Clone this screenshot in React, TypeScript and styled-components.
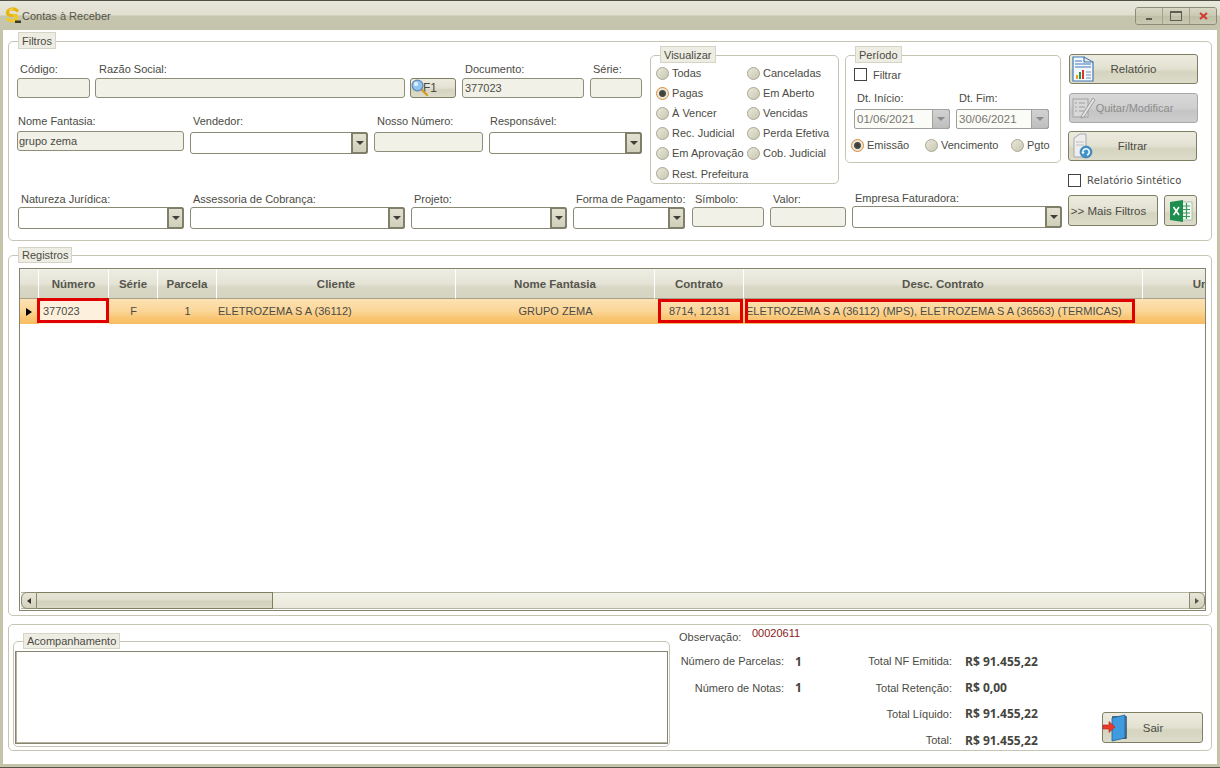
import React from "react";
import styled, { createGlobalStyle } from "styled-components";

const GlobalStyle = createGlobalStyle`
  html, body {
    margin: 0;
    padding: 0;
    background: #c5c4ab;
  }
  * {
    box-sizing: border-box;
  }
`;

const LogoIcon = () => (
  <svg width="18" height="17" viewBox="0 0 18 17">
    <path d="M13 3.5 C10 1 5 1.5 3.5 5 C3 7.5 5 8.5 8 8.5 L12 8.5" fill="none" stroke="#e6b50e" strokeWidth="3.2" strokeLinecap="round" />
    <path d="M3.5 12 C6 14.5 10 14.5 12.5 12 C13.5 10 12.5 8.5 10 8.5" fill="none" stroke="#f0c824" strokeWidth="3" strokeLinecap="round" />
    <path d="M5 3.5 L9 1.5" stroke="#fbe98a" strokeWidth="1" />
    <rect x="11" y="13.5" width="6" height="2.5" fill="#3c3a22" />
  </svg>
);

const SearchIcon = () => (
  <svg width="18" height="18" viewBox="0 0 18 18">
    <line x1="10" y1="10" x2="16" y2="16" stroke="#d89a2e" strokeWidth="2.4" strokeLinecap="round" />
    <circle cx="6.5" cy="6.5" r="5.4" fill="#8fc3f0" stroke="#5a86b8" strokeWidth="1.2" />
    <circle cx="5" cy="5" r="2.2" fill="#dcefff" />
  </svg>
);

const ReportIcon = () => (
  <svg width="22" height="26" viewBox="0 0 22 26">
    <path d="M1 1 H12 V6 H21 V25 H1 Z" fill="#f4f8fd" stroke="#3f76b6" strokeWidth="1.2" />
    <path d="M12 1 L21 6" stroke="#3f76b6" strokeWidth="1" fill="none" />
    <path d="M3 5 H10 M3 8 H19 M3 11 H19" stroke="#3f76b6" strokeWidth="1" />
    <rect x="4" y="19" width="2" height="4" fill="#e0a020" />
    <rect x="7" y="16" width="2" height="7" fill="#2f8f3a" />
    <rect x="10" y="14" width="2" height="9" fill="#d9352a" />
    <path d="M14 16 H19 M14 19 H19 M14 22 H19" stroke="#6b8fbd" strokeWidth="1" />
  </svg>
);

const NoteIcon = () => (
  <svg width="24" height="24" viewBox="0 0 24 24">
    <rect x="1" y="4" width="15" height="18" fill="#d8d8d8" stroke="#a3a3a3" />
    <path d="M3 8 H5 M7 8 H13 M3 12 H5 M7 12 H13 M3 16 H5 M7 16 H13" stroke="#a0a0a0" strokeWidth="1" />
    <path d="M10 20 L21 3 L23 5 L12 22 L9 23 Z" fill="#e4e4e4" stroke="#969696" strokeWidth="0.9" />
  </svg>
);

const RefreshDocIcon = () => (
  <svg width="22" height="26" viewBox="0 0 22 26">
    <path d="M3 5 L9 1 H15 V24 H3 Z" fill="#eeeeee" stroke="#a9a9a9" />
    <path d="M5 9 H13 M5 12 H13" stroke="#c0c0c0" />
    <circle cx="15" cy="19" r="6" fill="#3f93cf" stroke="#2a6fa5" strokeWidth="0.6" />
    <path d="M12 20 A3.2 3.2 0 1 1 16 22" fill="none" stroke="#ffffff" strokeWidth="1.5" />
    <path d="M10.5 19 L13.5 19 L12 21.5 Z" fill="#ffffff" />
  </svg>
);

const ExcelIcon = () => (
  <svg width="24" height="24" viewBox="0 0 24 24">
    <rect x="12" y="3" width="11" height="18" fill="#f4f8f4" stroke="#9ab89f" strokeWidth="0.8" />
    <path d="M14 7 H21 M14 10.5 H21 M14 14 H21 M14 17.5 H21 M17.5 4 V20" stroke="#3a9a5c" strokeWidth="1.2" />
    <path d="M1 3 L14 1 V23 L1 21 Z" fill="#1e8e4e" />
    <path d="M4.5 8 L10 16 M10 8 L4.5 16" stroke="#ffffff" strokeWidth="1.6" />
  </svg>
);

const DoorIcon = () => (
  <svg width="30" height="28" viewBox="0 0 30 28">
    <path d="M10 3 H24 V24 H20" fill="none" stroke="#27415f" strokeWidth="1.4" />
    <path d="M10 4 L23 1 V24 L10 27 Z" fill="#3f9ade" stroke="#1f5f94" strokeWidth="0.8" />
    <path d="M1 11 H7 V7.5 L13 13 L7 18.5 V15 H1 Z" fill="#e8392c" stroke="#b52318" strokeWidth="0.6" />
  </svg>
);

const Window = styled.div`
  display: flex;
  flex-direction: column;
  width: 1220px;
  height: 768px;
  overflow: hidden;
  background: #c5c4ab;
  border-bottom: 1px solid #55554a;
  font-family: "Liberation Sans", Arial, sans-serif;
  font-size: 11px;
  color: #4b4b44;
`;

const TitleBar = styled.div`
  display: flex;
  align-items: center;
  flex-shrink: 0;
  height: 30px;
  padding: 0 3px 0 4px;
  border-top: 1px solid #4f4f45;
  background: linear-gradient(to bottom, #e9e8dd 0, #dfdecf 14px, #c6c5ae 15px, #c4c3ab 100%);
`;

const TitleText = styled.span`
  color: #55554c;
`;

const WindowButtons = styled.div`
  display: flex;
  width: 82px;
  height: 18px;
  margin-left: auto;
  margin-top: 1px;
  border: 1px solid #8c8b75;
  border-radius: 3px;
  overflow: hidden;
`;

const WindowButton = styled.div`
  display: flex;
  align-items: center;
  justify-content: center;
  flex: 1;
  background: linear-gradient(to bottom, #d8d7c5, #c9c8b1 50%, #bfbea6 51%, #c9c8b2);
  border-left: 1px solid #a3a28b;

  &:first-child {
    border-left: 0;
  }
`;

const Content = styled.div`
  display: flex;
  flex: 1;
  flex-direction: column;
  margin: 0 3px 3px;
  padding: 11px 5px 0;
  background: #ffffff;
`;

const Panel = styled.div<{ $h: number; $mb?: number }>`
  position: relative;
  display: flex;
  flex-shrink: 0;
  height: ${(p) => p.$h}px;
  margin-bottom: ${(p) => p.$mb ?? 0}px;
  border: 1px solid #c6c5b3;
  border-radius: 5px;
`;

const Legend = styled.span<{ $compact?: boolean }>`
  position: absolute;
  top: ${(p) => (p.$compact ? -9 : -10)}px;
  left: 9px;
  height: ${(p) => (p.$compact ? 16 : 17)}px;
  padding: 0 3px;
  line-height: ${(p) => (p.$compact ? 15 : 16)}px;
  background: #eeede3;
  border: 1px solid #d6d5c5;
  white-space: nowrap;
`;

const FilterMain = styled.div`
  display: flex;
  flex-direction: column;
  width: 1053px;
  padding-left: 8px;
`;

const TopArea = styled.div`
  display: flex;
  height: 150px;
`;

const FieldRows = styled.div`
  width: 625px;
  padding-top: 20px;
`;

const FieldRow = styled.div<{ $mt?: number }>`
  display: flex;
  align-items: flex-start;
  margin-top: ${(p) => p.$mt ?? 0}px;
`;

const Field = styled.div<{ $w: number; $ml?: number; $gap?: number; $mt?: number }>`
  display: flex;
  flex-direction: column;
  flex-shrink: 0;
  gap: ${(p) => p.$gap ?? 2}px;
  width: ${(p) => p.$w}px;
  margin-left: ${(p) => p.$ml ?? 0}px;
  margin-top: ${(p) => p.$mt ?? 0}px;
`;

const Label = styled.label<{ $lead?: number }>`
  display: block;
  height: 14px;
  padding-left: ${(p) => p.$lead ?? 3}px;
  line-height: 14px;
  white-space: nowrap;
`;

const TextBox = styled.div<{ $pad?: number }>`
  height: 20px;
  padding: 0 ${(p) => p.$pad ?? 2}px;
  line-height: 18px;
  background: #f2f1e8;
  border: 1px solid #8f8e79;
  border-radius: 3px;
`;

const TextBoxLow = styled(TextBox)`
  margin-top: 1px;
`;

const ComboBox = styled.div<{ $low?: boolean }>`
  display: flex;
  justify-content: flex-end;
  height: 22px;
  margin-top: ${(p) => (p.$low ? 1 : 0)}px;
  background: #ffffff;
  border: 1px solid #8a8974;
  border-radius: 3px;
`;

const ComboArrow = styled.div`
  display: flex;
  align-items: center;
  justify-content: center;
  width: 17px;
  margin: -1px;
  background: linear-gradient(to bottom, #e3e2d2, #d0cfba);
  border: 2px solid #807f69;
  border-radius: 0 3px 3px 0;

  &::after {
    content: "";
    border-left: 4px solid transparent;
    border-right: 4px solid transparent;
    border-top: 4px solid #3f3f38;
  }
`;

const Combo = ({ low }: { low?: boolean }) => (
  <ComboBox $low={low}>
    <ComboArrow />
  </ComboBox>
);

const GroupBox = styled.div<{ $w: number; $h: number; $ml: number }>`
  position: relative;
  flex-shrink: 0;
  width: ${(p) => p.$w}px;
  height: ${(p) => p.$h}px;
  margin: 13px 0 0 ${(p) => p.$ml}px;
  border: 1px solid #c6c5b3;
  border-radius: 5px;
`;

const RadioGrid = styled.div`
  display: grid;
  grid-template-columns: 91px 1fr;
  grid-auto-rows: 20px;
  padding: 7px 0 0 5px;

  > :last-child {
    margin-top: 1px;
  }
`;

const RadioItem = styled.div<{ $w?: number }>`
  display: flex;
  align-items: center;
  gap: 3px;
  width: ${(p) => (p.$w ? `${p.$w}px` : "auto")};
  white-space: nowrap;
`;

const RadioDot = styled.span<{ $on?: boolean }>`
  flex-shrink: 0;
  width: 13px;
  height: 13px;
  border-radius: 50%;
  border: 1px solid ${(p) => (p.$on ? "#d98a34" : "#a7a690")};
  background: ${(p) =>
    p.$on
      ? "radial-gradient(circle, #3c3c36 0, #4b4b44 3px, #e9e8da 4px)"
      : "linear-gradient(135deg, #e9e8da, #c9c8b2)"};
`;

const Radio = ({ label, on, w }: { label: string; on?: boolean; w?: number }) => (
  <RadioItem $w={w}>
    <RadioDot $on={on} />
    {label}
  </RadioItem>
);

const PeriodBody = styled.div`
  display: flex;
  flex-direction: column;
  padding: 12px 0 0 8px;
`;

const CheckRow = styled.div`
  display: flex;
  align-items: center;
  height: 13px;
  gap: 6px;
`;

const CheckBox = styled.span`
  width: 13px;
  height: 13px;
  flex-shrink: 0;
  background: #ffffff;
  border: 1px solid #44443c;
`;

const DateRow = styled.div`
  display: flex;
  gap: 6px;
  margin-top: 10px;
`;

const DateBox = styled.div`
  display: flex;
  justify-content: space-between;
  height: 20px;
  padding-left: 2px;
  line-height: 18px;
  font-size: 11.5px;
  color: #77776f;
  background: #fbfbf8;
  border: 1px solid #9f9f9f;
  border-radius: 2px;
`;

const DateArrow = styled(ComboArrow)`
  background: linear-gradient(to bottom, #d2d2d2, #bebebe);
  border: 1px solid #a2a2a2;
  width: 18px;

  &::after {
    border-top-color: #8a8a8a;
  }
`;

const PeriodRadios = styled.div`
  display: flex;
  height: 14px;
  margin: 9px 0 0 -3px;
`;

const SideColumn = styled.div`
  display: flex;
  flex-direction: column;
  width: 130px;
  margin-left: 6px;
  padding-top: 12px;
`;

const ActionButton = styled.div<{ $w?: number; $h?: number; $mt?: number; $ml?: number; $off?: boolean }>`
  position: relative;
  display: flex;
  align-items: center;
  justify-content: center;
  flex-shrink: 0;
  width: ${(p) => p.$w ?? 129}px;
  height: ${(p) => p.$h ?? 30}px;
  margin-top: ${(p) => p.$mt ?? 0}px;
  margin-left: ${(p) => p.$ml ?? 0}px;
  border: 1px solid ${(p) => (p.$off ? "#a9a9a9" : "#7f7e62")};
  border-radius: 3px;
  font-size: 11.5px;
  color: ${(p) => (p.$off ? "#8d8d8d" : "#4b4b44")};
  background: ${(p) =>
    p.$off
      ? "linear-gradient(to bottom, #d8d8d8, #cfcfcf 50%, #c4c4c4 60%, #cdcdcd)"
      : "linear-gradient(to bottom, #ecebdf, #e2e1d1 50%, #d5d4bf 60%, #dddccb)"};

  svg {
    position: absolute;
    left: 2px;
    top: 1px;
  }
`;

const SearchButton = styled(ActionButton)`
  svg {
    left: 0;
    top: 0;
  }
`;

const F1Label = styled.span`
  margin-right: 6px;
  font-size: 12px;
`;

const QuitLabel = styled.span`
  margin-left: 2px;
  font-size: 11px;
`;

const SyntheticRow = styled(CheckRow)`
  margin-top: 13px;
  font-family: "DejaVu Sans", Verdana, sans-serif;
  font-size: 10px;
  letter-spacing: 0.15px;
`;

const BottomButtons = styled.div`
  display: flex;
  gap: 6px;
  margin-top: 8px;
`;

const MoreLabel = styled.span`
  margin-right: 9px;
`;

const ExcelButton = styled(ActionButton)`
  svg {
    left: 4px;
    top: 3px;
  }
`;

const GridBox = styled.div`
  display: flex;
  flex: 1;
  flex-direction: column;
  margin: 12px 5px 4px 10px;
  overflow: hidden;
  background: #ffffff;
  border: 1px solid #85846e;
`;

const HeaderRow = styled.div`
  display: flex;
  flex-shrink: 0;
  height: 30px;
`;

const HeaderCell = styled.div<{ $w: number }>`
  display: flex;
  align-items: center;
  justify-content: center;
  flex-shrink: 0;
  width: ${(p) => p.$w}px;
  font-size: 11.5px;
  font-weight: 700;
  color: #55554c;
  background: linear-gradient(to bottom, #eeede3, #e4e3d5 50%, #d9d8c6 60%, #d5d4c1);
  border-top: 1px solid #f2f1e8;
  border-right: 1px solid #ffffff;
  border-bottom: 1px solid #a3a28c;
`;

const DataRow = styled.div`
  position: relative;
  display: flex;
  flex-shrink: 0;
  height: 25px;
  background: linear-gradient(to bottom, #fde2b4, #fbd596 50%, #f9c674 75%, #f8bd62);
`;

const DataCell = styled.div<{ $w: number; $align?: string; $pad?: number; $selected?: boolean }>`
  flex-shrink: 0;
  width: ${(p) => p.$w}px;
  padding-left: ${(p) => p.$pad ?? 0}px;
  line-height: 24px;
  white-space: nowrap;
  text-align: ${(p) => p.$align ?? "center"};
  background: ${(p) => (p.$selected ? "#fdf1dd" : "transparent")};
`;

const RowArrow = styled.div`
  display: flex;
  align-items: center;
  justify-content: center;
  flex-shrink: 0;
  width: 19px;
  padding-right: 2px;

  &::after {
    content: "";
    border-top: 4px solid transparent;
    border-bottom: 4px solid transparent;
    border-left: 6px solid #000000;
  }
`;

const Marker = styled.div<{ $left: number; $w: number; $top?: number; $h?: number }>`
  position: absolute;
  top: ${(p) => p.$top ?? 0}px;
  left: ${(p) => p.$left}px;
  width: ${(p) => p.$w}px;
  height: ${(p) => p.$h ?? 24}px;
  border: 3px solid #e00000;
`;

const GridSpace = styled.div`
  flex: 1;
`;

const ScrollBar = styled.div`
  display: flex;
  flex-shrink: 0;
  height: 17px;
  margin: 0 0 1px 1px;
  background: linear-gradient(to bottom, #f3f2e8, #e9e8da);
  border-top: 1px solid #b5b4a0;
  border-bottom: 1px solid #b5b4a0;
`;

const ScrollEnd = styled.div<{ $right?: boolean }>`
  display: flex;
  align-items: center;
  justify-content: center;
  width: 16px;
  margin: -1px 0;
  margin-left: ${(p) => (p.$right ? "auto" : 0)};
  background: linear-gradient(to bottom, #e7e6d8, #d2d1bd);
  border: 1px solid #8b8a70;
  border-radius: ${(p) => (p.$right ? "0 6px 6px 0" : "6px 0 0 6px")};

  &::after {
    content: "";
    border-top: 3px solid transparent;
    border-bottom: 3px solid transparent;
    ${(p) => (p.$right ? "border-left: 4px solid #55554c;" : "border-right: 4px solid #33332c;")}
  }
`;

const ScrollThumb = styled.div`
  width: 236px;
  margin: -1px 0;
  background: linear-gradient(to bottom, #e4e3d4, #e0dfcf 45%, #d2d1bc 55%, #d9d8c6);
  border: 1px solid #7f7e5e;
  border-left: 0;
`;

const NotesGroup = styled.div`
  position: relative;
  flex-shrink: 0;
  width: 657px;
  height: 106px;
  margin: 16px 0 0 4px;
  padding: 9px 1px 0;
  border: 1px solid #c6c5b3;
  border-radius: 5px;
`;

const NotesBox = styled.div`
  height: 93px;
  background: #ffffff;
  border: 1px solid #85846e;
  box-shadow: inset 1px 0 #b5b4a0, inset 0 -1px #b5b4a0;
`;

const Summary = styled.div`
  width: 400px;
  margin-left: 9px;
  padding-top: 5px;
`;

const ObservationRow = styled.div`
  display: flex;
  height: 14px;
  line-height: 14px;
`;

const ObservationLabel = styled.span`
  width: 73px;
`;

const ObservationValue = styled.span`
  margin-top: -4px;
  color: #8a1a1a;
`;

const Totals = styled.div`
  display: grid;
  grid-template-columns: 105px 45px 123px 1fr;
  grid-auto-rows: 26.4px;
  align-items: center;
  margin-top: 4px;
`;

const TotalLabel = styled.span`
  text-align: right;
  white-space: nowrap;
`;

const TotalValue = styled.span<{ $pad: number }>`
  padding-left: ${(p) => p.$pad}px;
  font-family: "Open Sans", sans-serif;
  font-size: 12px;
  font-weight: 700;
  color: #45453e;
  white-space: nowrap;
`;

const ExitButton = styled(ActionButton)`
  align-self: flex-end;
  margin: 0 0 7px 23px;
  padding-left: 1px;

  svg {
    left: -1px;
    top: 1px;
  }
`;

const LogoSlot = styled.span`
  display: flex;
  width: 18px;
  margin-top: -1px;
`;

export default function App() {
  return (
    <>
      <GlobalStyle />
      <Window>
        <TitleBar>
          <LogoSlot>
            <LogoIcon />
          </LogoSlot>
          <TitleText>Contas à Receber</TitleText>
          <WindowButtons>
            <WindowButton>
              <svg width="8" height="8" viewBox="0 0 8 8">
                <rect x="1" y="6" width="6" height="2" fill="#5d5d52" />
              </svg>
            </WindowButton>
            <WindowButton>
              <svg width="12" height="10" viewBox="0 0 12 10">
                <rect x="0.5" y="0.5" width="11" height="9" fill="none" stroke="#5d5d52" />
                <rect x="0" y="0" width="12" height="2" fill="#5d5d52" />
              </svg>
            </WindowButton>
            <WindowButton>
              <svg width="9" height="8" viewBox="0 0 9 8">
                <path d="M1 1 L8 7 M8 1 L1 7" stroke="#d2392c" strokeWidth="2" />
              </svg>
            </WindowButton>
          </WindowButtons>
        </TitleBar>

        <Content>
          <Panel $h={200} $mb={14}>
            <Legend>Filtros</Legend>
            <FilterMain>
              <TopArea>
                <FieldRows>
                  <FieldRow>
                    <Field $w={73}>
                      <Label>Código:</Label>
                      <TextBox />
                    </Field>
                    <Field $w={310} $ml={5}>
                      <Label $lead={4}>Razão Social:</Label>
                      <TextBox />
                    </Field>
                    <Field $w={46} $ml={5}>
                      <Label />
                      <SearchButton $w={46} $h={20}>
                        <SearchIcon />
                        <F1Label>F1</F1Label>
                      </SearchButton>
                    </Field>
                    <Field $w={122} $ml={6}>
                      <Label>Documento:</Label>
                      <TextBox>377023</TextBox>
                    </Field>
                    <Field $w={52} $ml={6}>
                      <Label>Série:</Label>
                      <TextBox />
                    </Field>
                  </FieldRow>
                  <FieldRow $mt={16}>
                    <Field $w={167} $gap={3}>
                      <Label $lead={1}>Nome Fantasia:</Label>
                      <TextBox $pad={1}>grupo zema</TextBox>
                    </Field>
                    <Field $w={178} $ml={6} $gap={3}>
                      <Label $lead={3}>Vendedor:</Label>
                      <Combo low />
                    </Field>
                    <Field $w={109} $ml={6} $gap={3}>
                      <Label>Nosso Número:</Label>
                      <TextBoxLow />
                    </Field>
                    <Field $w={153} $ml={6} $gap={3}>
                      <Label $lead={1}>Responsável:</Label>
                      <Combo low />
                    </Field>
                  </FieldRow>
                </FieldRows>

                <GroupBox $w={189} $h={129} $ml={8}>
                  <Legend>Visualizar</Legend>
                  <RadioGrid>
                    <Radio label="Todas" />
                    <Radio label="Canceladas" />
                    <Radio label="Pagas" on />
                    <Radio label="Em Aberto" />
                    <Radio label="À Vencer" />
                    <Radio label="Vencidas" />
                    <Radio label="Rec. Judicial" />
                    <Radio label="Perda Efetiva" />
                    <Radio label="Em Aprovação" />
                    <Radio label="Cob. Judicial" />
                    <Radio label="Rest. Prefeitura" />
                  </RadioGrid>
                </GroupBox>

                <GroupBox $w={216} $h={108} $ml={6}>
                  <Legend>Período</Legend>
                  <PeriodBody>
                    <CheckRow>
                      <CheckBox />
                      Filtrar
                    </CheckRow>
                    <DateRow>
                      <Field $w={96} $gap={4}>
                        <Label>Dt. Início:</Label>
                        <DateBox>
                          01/06/2021
                          <DateArrow />
                        </DateBox>
                      </Field>
                      <Field $w={93} $gap={4}>
                        <Label>Dt. Fim:</Label>
                        <DateBox>
                          30/06/2021
                          <DateArrow />
                        </DateBox>
                      </Field>
                    </DateRow>
                    <PeriodRadios>
                      <Radio label="Emissão" on w={74} />
                      <Radio label="Vencimento" w={86} />
                      <Radio label="Pgto" />
                    </PeriodRadios>
                  </PeriodBody>
                </GroupBox>
              </TopArea>

              <FieldRow>
                <Field $w={166} $ml={1} $gap={1}>
                  <Label>Natureza Jurídica:</Label>
                  <Combo />
                </Field>
                <Field $w={215} $ml={6} $gap={1}>
                  <Label>Assessoria de Cobrança:</Label>
                  <Combo />
                </Field>
                <Field $w={156} $ml={6} $gap={1}>
                  <Label>Projeto:</Label>
                  <Combo />
                </Field>
                <Field $w={112} $ml={6} $gap={1}>
                  <Label>Forma de Pagamento:</Label>
                  <Combo />
                </Field>
                <Field $w={72} $ml={7} $gap={1}>
                  <Label>Símbolo:</Label>
                  <TextBox />
                </Field>
                <Field $w={76} $ml={6} $gap={1}>
                  <Label>Valor:</Label>
                  <TextBox />
                </Field>
                <Field $w={210} $ml={6} $gap={1} $mt={-1}>
                  <Label>Empresa Faturadora:</Label>
                  <Combo />
                </Field>
              </FieldRow>
            </FilterMain>

            <SideColumn>
              <ActionButton $ml={1}>
                <ReportIcon />
                Relatório
              </ActionButton>
              <ActionButton $ml={1} $mt={9} $off>
                <NoteIcon />
                <QuitLabel>Quitar/Modificar</QuitLabel>
              </ActionButton>
              <ActionButton $mt={8}>
                <RefreshDocIcon />
                Filtrar
              </ActionButton>
              <SyntheticRow>
                <CheckBox />
                Relatório Sintético
              </SyntheticRow>
              <BottomButtons>
                <ActionButton $w={90} $h={31}>
                  <MoreLabel>&gt;&gt; Mais Filtros</MoreLabel>
                </ActionButton>
                <ExcelButton $w={33} $h={31}>
                  <ExcelIcon />
                </ExcelButton>
              </BottomButtons>
            </SideColumn>
          </Panel>

          <Panel $h={361} $mb={8}>
            <Legend $compact>Registros</Legend>
            <GridBox>
              <HeaderRow>
                <HeaderCell $w={19} />
                <HeaderCell $w={70}>Número</HeaderCell>
                <HeaderCell $w={49}>Série</HeaderCell>
                <HeaderCell $w={59}>Parcela</HeaderCell>
                <HeaderCell $w={239}>Cliente</HeaderCell>
                <HeaderCell $w={199}>Nome Fantasia</HeaderCell>
                <HeaderCell $w={89}>Contrato</HeaderCell>
                <HeaderCell $w={399}>Desc. Contrato</HeaderCell>
                <HeaderCell $w={146}>Unidade</HeaderCell>
              </HeaderRow>
              <DataRow>
                <RowArrow />
                <DataCell $w={70} $align="left" $pad={4} $selected>
                  377023
                </DataCell>
                <DataCell $w={49}>F</DataCell>
                <DataCell $w={59}>1</DataCell>
                <DataCell $w={239} $align="left" $pad={1}>
                  ELETROZEMA S A (36112)
                </DataCell>
                <DataCell $w={199}>GRUPO ZEMA</DataCell>
                <DataCell $w={89}>8714, 12131</DataCell>
                <DataCell $w={399} $align="left" $pad={2}>
                  ELETROZEMA S A (36112) (MPS), ELETROZEMA S A (36563) (TERMICAS)
                </DataCell>
                <Marker $left={17} $w={72} $top={-1} $h={25} />
                <Marker $left={638} $w={85} />
                <Marker $left={725} $w={390} />
              </DataRow>
              <GridSpace />
              <ScrollBar>
                <ScrollEnd />
                <ScrollThumb />
                <ScrollEnd $right />
              </ScrollBar>
            </GridBox>
          </Panel>

          <Panel $h={127}>
            <NotesGroup>
              <Legend $compact>Acompanhamento</Legend>
              <NotesBox />
            </NotesGroup>
            <Summary>
              <ObservationRow>
                <ObservationLabel>Observação:</ObservationLabel>
                <ObservationValue>00020611</ObservationValue>
              </ObservationRow>
              <Totals>
                <TotalLabel>Número de Parcelas:</TotalLabel>
                <TotalValue $pad={11}>1</TotalValue>
                <TotalLabel>Total NF Emitida:</TotalLabel>
                <TotalValue $pad={13}>R$ 91.455,22</TotalValue>
                <TotalLabel>Número de Notas:</TotalLabel>
                <TotalValue $pad={11}>1</TotalValue>
                <TotalLabel>Total Retenção:</TotalLabel>
                <TotalValue $pad={13}>R$ 0,00</TotalValue>
                <span />
                <span />
                <TotalLabel>Total Líquido:</TotalLabel>
                <TotalValue $pad={13}>R$ 91.455,22</TotalValue>
                <span />
                <span />
                <TotalLabel>Total:</TotalLabel>
                <TotalValue $pad={13}>R$ 91.455,22</TotalValue>
              </Totals>
            </Summary>
            <ExitButton $w={101} $h={31}>
              <DoorIcon />
              Sair
            </ExitButton>
          </Panel>
        </Content>
      </Window>
    </>
  );
}
